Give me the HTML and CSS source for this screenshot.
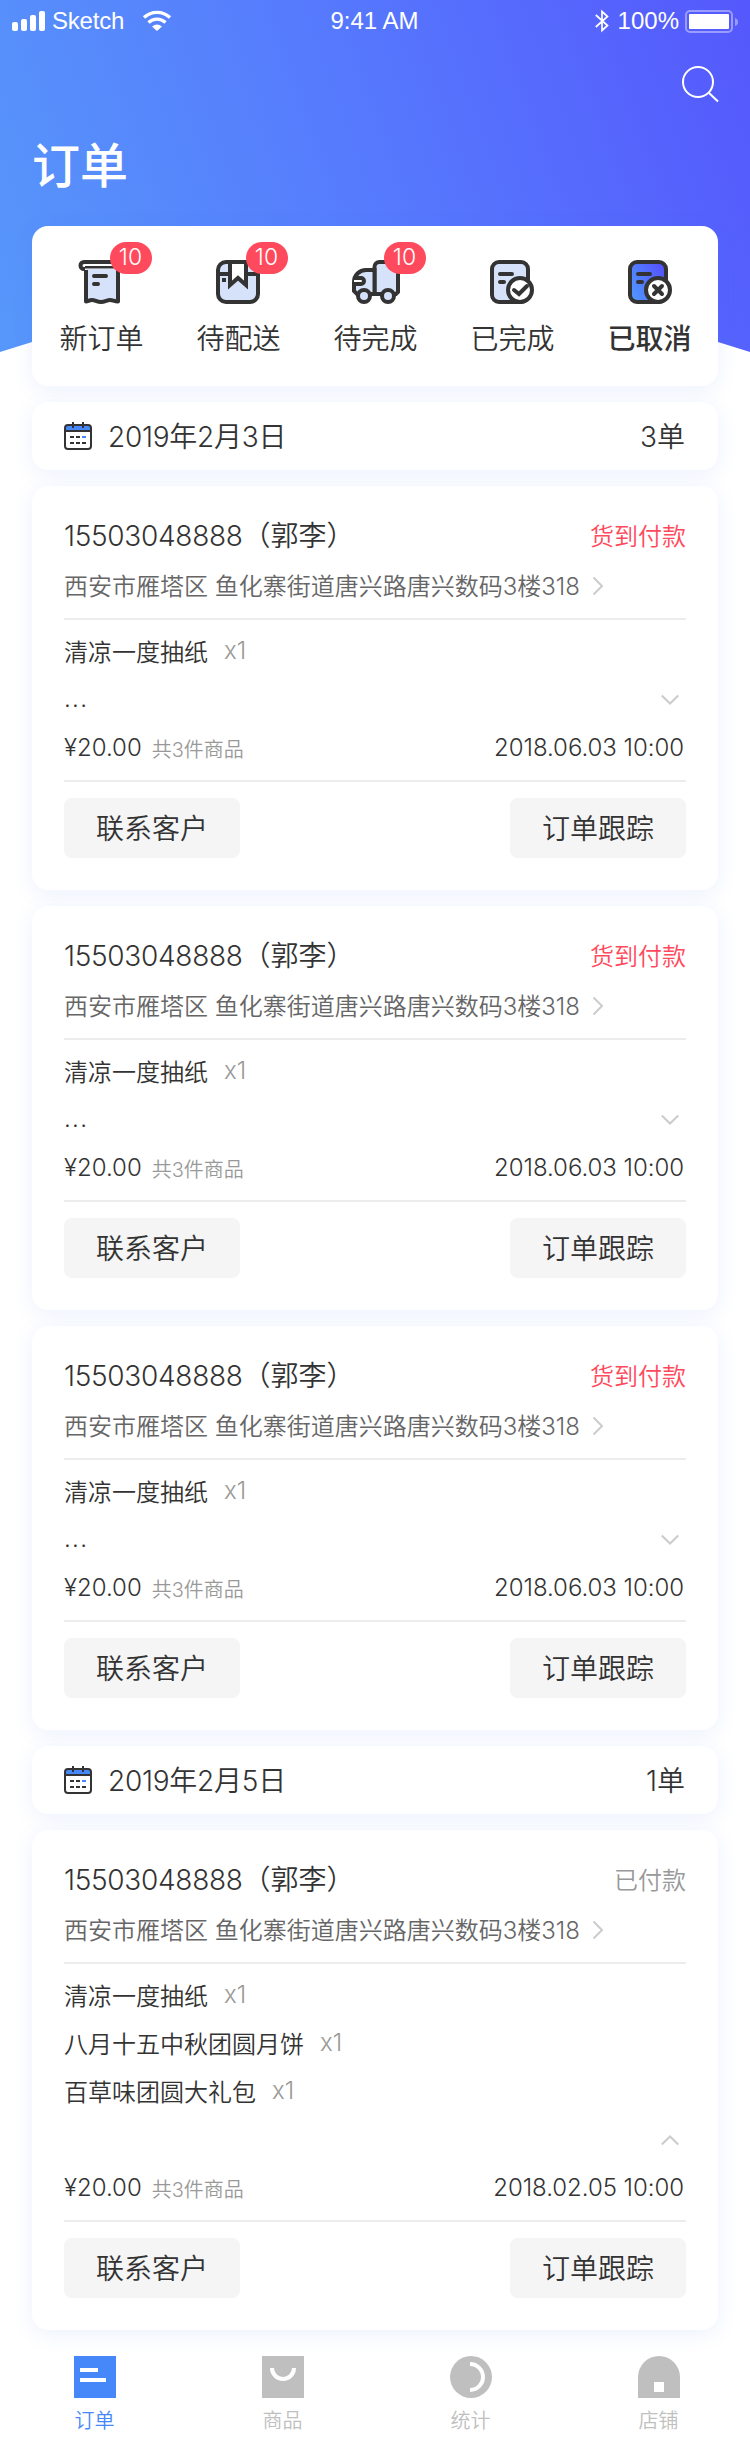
FILE: index.html
```html
<!DOCTYPE html>
<html lang="zh-CN">
<head>
<meta charset="utf-8">
<title>订单</title>
<link rel="stylesheet" href="styles.css">
</head>
<body>
<svg class="sprite" aria-hidden="true">
  <defs>
    <linearGradient id="active-fill" x1="0" y1=".8" x2="1" y2=".2"><stop offset="0" stop-color="#4f97ff"/><stop offset="1" stop-color="#5550fc"/></linearGradient>
    <symbol id="calendar" viewBox="0 0 28 28">
      <path d="M1 9V6a3 3 0 0 1 3-3h20a3 3 0 0 1 3 3v3z" fill="#4688fa"/>
      <rect x="1" y="3" width="26" height="24" rx="3" fill="none" stroke="#333" stroke-width="2"/>
      <path d="M1 9h26M9 0v6M19 0v6" stroke="#333" stroke-width="2"/>
      <path d="M6 15h4M12 15h4M6 21h4M12 21h4M18 21h4" stroke="#333" stroke-width="2"/>
      <path d="M18 15h4" stroke="#4688fa" stroke-width="2"/>
    </symbol>
    <symbol id="chevron-right" viewBox="0 0 12 20"><path d="M1.500 1.500 10 10l-8.500 8.500" fill="none" stroke="#ccc" stroke-width="2"/></symbol>
    <symbol id="chevron-down" viewBox="0 0 18 12"><path d="M.800 1.500 9 9.500l8.200-8" fill="none" stroke="#ccc" stroke-width="2"/></symbol>
  </defs>
</svg>

<div class="screen">
  <header class="hero">
    <div class="status">
      <div class="status-left">
        <svg class="signal" width="33" height="20" viewBox="0 0 33 20" fill="#fff"><rect y="11" width="6" height="9" rx="2"/><rect x="9" y="8" width="6" height="12" rx="2"/><rect x="18" y="4" width="6" height="16" rx="2"/><rect x="27" width="6" height="20" rx="2"/></svg>
        <span class="carrier">Sketch</span>
        <svg class="wifi" width="28" height="20" viewBox="0 0 28 20"><path d="M1 6.500a19 19 0 0 1 26 0M5.500 11.500a12.500 12.500 0 0 1 17 0" fill="none" stroke="#fff" stroke-width="3.400"/><path d="M9 15.500a8 8 0 0 1 10 0L14 20z" fill="#fff"/></svg>
      </div>
      <div class="clock">9:41 AM</div>
      <div class="status-right">
        <svg width="14" height="24" viewBox="0 0 14 24"><path d="M.800 6 12.500 16.500 7 21.500v-19l5.500 5L.800 18" fill="none" stroke="#fff" stroke-width="1.700"/></svg>
        <span class="percent">100%</span>
        <svg class="battery" width="54" height="23" viewBox="0 0 54 23"><rect x="1" y="1" width="46" height="21" rx="4" fill="none" stroke="#fff" stroke-opacity=".4" stroke-width="2"/><rect x="4" y="4" width="40" height="15" rx="1" fill="#fff"/><path d="M50 8q3 1 3 4t-3 4z" fill="#fff" fill-opacity=".4"/></svg>
      </div>
    </div>
    <div class="search"><svg width="38" height="38" viewBox="0 0 38 38"><circle cx="17" cy="17" r="15" fill="none" stroke="#fff" stroke-width="2"/><path d="m28 28 9 8.500" stroke="#fff" stroke-width="2"/></svg></div>
    <h1>订单</h1>
  </header>

  <main class="content">
    <nav class="card tabs">
      <a class="tab"><span class="tab-icon">
        <svg width="48" height="48" viewBox="0 0 48 48"><path d="M9 11h32v32c-4 0-5-2-8-2s-5 3-9 3-6-2-9-2-4 1.500-6 1.500z" fill="#d5e2fa"/><path d="M9 12v31.500c2 0 3-1.500 6-1.500s5 2 9 2 6-2 9-2 4 1.500 8 1.500V12" fill="none" stroke="#333" stroke-width="4" stroke-linejoin="round"/><path d="M42 4H7a3.500 3.500 0 0 0 0 7h1" fill="#fff" stroke="#333" stroke-width="4"/><path d="M8 9h35" stroke="#333" stroke-width="3"/><path d="M7 7h36" stroke="#fff" stroke-width="2"/><path d="M17 18h12M17 26h4" stroke="#333" stroke-width="4" stroke-linecap="round"/></svg>
        <b class="badge">10</b></span><span class="tab-label">新订单</span></a>
      <a class="tab"><span class="tab-icon">
        <svg width="48" height="48" viewBox="0 0 48 48"><rect x="4" y="4" width="40" height="40" rx="8" fill="#d5e2fa" stroke="#333" stroke-width="4"/><path d="M4 16h40" stroke="#333" stroke-width="4"/><path d="M16 4h16v23l-8-7-8 7z" fill="#fff" stroke="#333" stroke-width="4"/><path d="M8 20h4v4H8z" fill="#333"/></svg>
        <b class="badge badge-near">10</b></span><span class="tab-label">待配送</span></a>
      <a class="tab"><span class="tab-icon">
        <svg width="48" height="48" viewBox="0 0 48 48"><g stroke="#333" stroke-width="4"><path d="M23.500 36V9a5 5 0 0 1 5-5H42a5 5 0 0 1 5 5v25l-2 2z" fill="#d5e2fa"/><path d="M23.500 12H15A12 12 0 0 0 3 24v9l3 3h17.500z" fill="#d5e2fa"/><path d="M3 20h7a3 3 0 0 1 0 6H3" fill="#fff"/><circle cx="13" cy="38" r="6" fill="#d5e2fa"/><circle cx="37" cy="38" r="6" fill="#d5e2fa"/></g></svg>
        <b class="badge">10</b></span><span class="tab-label">待完成</span></a>
      <a class="tab"><span class="tab-icon">
        <svg width="48" height="48" viewBox="0 0 48 48"><g stroke="#333" stroke-width="4" stroke-linecap="round"><rect x="4" y="4" width="36" height="40" rx="7" fill="#d5e2fa"/><path d="M12 16h12M12 24h4"/><circle cx="32" cy="32" r="12" fill="#fff"/><path d="m26 32 5 4 8-8" fill="none"/></g></svg>
        </span><span class="tab-label">已完成</span></a>
      <a class="tab active"><span class="tab-icon">
        <svg width="48" height="48" viewBox="0 0 48 48"><g stroke="#333" stroke-width="4" stroke-linecap="round"><rect x="5" y="4" width="36" height="40" rx="7" fill="url(#active-fill)"/><path d="M13 16h12M13 24h4"/><circle cx="33" cy="32" r="12" fill="#fff"/><path d="m29 28 8 8m0-8-8 8"/></g></svg>
        </span><span class="tab-label">已取消</span></a>
    </nav>

    <section class="card day"><svg class="cal" width="28" height="28"><use href="#calendar"/></svg><h2>2019年2月3日</h2><span class="count">3单</span></section>

    <article class="card order">
      <div class="head"><span class="name"><span class="phone">15503048888</span>（郭李）</span><span class="pay">货到付款</span></div>
      <div class="address"><span>西安市雁塔区 鱼化寨街道唐兴路唐兴数码3楼318</span><svg width="12" height="20"><use href="#chevron-right"/></svg></div>
      <div class="goods">
        <div class="row"><span>清凉一度抽纸</span><span class="qty">x1</span></div>
        <div class="row more"><span class="dots">...</span><svg width="18" height="12"><use href="#chevron-down"/></svg></div>
        <div class="row total"><span class="price">¥20.00</span><span class="sum">共3件商品</span><time>2018.06.03 10:00</time></div>
      </div>
      <div class="actions"><button>联系客户</button><button>订单跟踪</button></div>
    </article>

    <article class="card order">
      <div class="head"><span class="name"><span class="phone">15503048888</span>（郭李）</span><span class="pay">货到付款</span></div>
      <div class="address"><span>西安市雁塔区 鱼化寨街道唐兴路唐兴数码3楼318</span><svg width="12" height="20"><use href="#chevron-right"/></svg></div>
      <div class="goods">
        <div class="row"><span>清凉一度抽纸</span><span class="qty">x1</span></div>
        <div class="row more"><span class="dots">...</span><svg width="18" height="12"><use href="#chevron-down"/></svg></div>
        <div class="row total"><span class="price">¥20.00</span><span class="sum">共3件商品</span><time>2018.06.03 10:00</time></div>
      </div>
      <div class="actions"><button>联系客户</button><button>订单跟踪</button></div>
    </article>

    <article class="card order">
      <div class="head"><span class="name"><span class="phone">15503048888</span>（郭李）</span><span class="pay">货到付款</span></div>
      <div class="address"><span>西安市雁塔区 鱼化寨街道唐兴路唐兴数码3楼318</span><svg width="12" height="20"><use href="#chevron-right"/></svg></div>
      <div class="goods">
        <div class="row"><span>清凉一度抽纸</span><span class="qty">x1</span></div>
        <div class="row more"><span class="dots">...</span><svg width="18" height="12"><use href="#chevron-down"/></svg></div>
        <div class="row total"><span class="price">¥20.00</span><span class="sum">共3件商品</span><time>2018.06.03 10:00</time></div>
      </div>
      <div class="actions"><button>联系客户</button><button>订单跟踪</button></div>
    </article>

    <section class="card day"><svg class="cal" width="28" height="28"><use href="#calendar"/></svg><h2>2019年2月5日</h2><span class="count">1单</span></section>

    <article class="card order">
      <div class="head"><span class="name"><span class="phone">15503048888</span>（郭李）</span><span class="pay paid">已付款</span></div>
      <div class="address"><span>西安市雁塔区 鱼化寨街道唐兴路唐兴数码3楼318</span><svg width="12" height="20"><use href="#chevron-right"/></svg></div>
      <div class="goods">
        <div class="row"><span>清凉一度抽纸</span><span class="qty">x1</span></div>
        <div class="row"><span>八月十五中秋团圆月饼</span><span class="qty">x1</span></div>
        <div class="row"><span>百草味团圆大礼包</span><span class="qty">x1</span></div>
        <div class="row more open"><svg width="18" height="12"><use href="#chevron-down"/></svg></div>
        <div class="row total"><span class="price">¥20.00</span><span class="sum">共3件商品</span><time>2018.02.05 10:00</time></div>
      </div>
      <div class="actions"><button>联系客户</button><button>订单跟踪</button></div>
    </article>
  </main>

  <footer class="tabbar">
    <a class="on"><svg width="42" height="42" viewBox="0 0 42 42"><path d="M0 0h42v42H0z" fill="#4688fa"/><path d="M6 12h18v4H6zM6 22h26v4H6z" fill="#fff"/></svg><span>订单</span></a>
    <a><svg width="42" height="42" viewBox="0 0 42 42"><path d="M0 0h42v42H0z" fill="#bfbfbf"/><path d="M10 12a11 11 0 0 0 22 0" fill="none" stroke="#fff" stroke-width="4"/></svg><span>商品</span></a>
    <a><svg width="42" height="42" viewBox="0 0 42 42"><circle cx="21" cy="21" r="21" fill="#bfbfbf"/><path d="M20 8a13 13 0 0 1 0 26" fill="none" stroke="#fff" stroke-width="4"/></svg><span>统计</span></a>
    <a><svg width="42" height="42" viewBox="0 0 42 42"><path d="M0 42V21a21 21 0 0 1 42 0v21z" fill="#bfbfbf"/><path d="M16 26h10v10H16z" fill="#fff"/></svg><span>店铺</span></a>
  </footer>
</div>
</body>
</html>
```
FILE: styles.css
```css
* { box-sizing: border-box; }
body { margin: 0; background: #fff; color: #333; font-family: "Inter", "Noto Sans CJK SC", sans-serif; font-weight: 350; }
svg { display: block; flex: none; overflow: visible; }
.sprite { position: absolute; width: 0; height: 0; }
.screen { width: 750px; height: 2444px; overflow: hidden; display: flex; flex-direction: column; }

.hero { height: 352px; flex: none; color: #fff; background: linear-gradient(70deg, #5797fa 0%, #567bfd 48%, #5558fc 100%); clip-path: polygon(0 0, 100% 0, 100% 100%, 50% 235px, 0 100%); }
.status { height: 40px; display: grid; grid-template-columns: 1fr auto 1fr; align-items: center; padding: 0 11px 0 12px; font: 400 24px/40px "Liberation Sans", sans-serif; }
.status-left, .status-right { display: flex; align-items: center; }
.carrier { margin-left: 7px; line-height: 38px; letter-spacing: -.2px; }
.wifi { margin-left: 19px; }
.clock { line-height: 42px; margin-right: 2px; }
.status-right { justify-content: flex-end; }
.percent { margin: 0 6px 0 9px; line-height: 38px; }
.search { display: flex; justify-content: flex-end; padding: 25px 31px 0 0; }
h1 { margin: 28px 0 0 32px; font-size: 48px; line-height: 70px; font-weight: 500; }

.content { margin-top: -126px; padding: 0 32px; display: flex; flex-direction: column; gap: 16px; position: relative; }
.card { background: #fff; border-radius: 16px; box-shadow: 0 4px 20px rgba(70, 120, 250, .1); }

.tabs { height: 160px; display: grid; grid-template-columns: 138px 136px 138px 136px 138px; }
.tab { display: flex; flex-direction: column; align-items: center; padding-top: 32px; }
.tab-icon { position: relative; }
.badge { position: absolute; left: 33px; top: -16px; width: 42px; height: 32px; padding-right: 1px; border-radius: 16px; background: #ff495c; color: #fff; font-size: 23px; font-weight: 300; line-height: 31px; text-align: center; }
.badge-near { left: 32px; }
.tab-label { margin: 13px 0 0 1px; font-size: 28px; line-height: 40px; }
.active .tab-label { font-weight: 500; }

.day { height: 68px; display: flex; align-items: center; padding: 0 33px 2px 32px; font-size: 28px; }
.cal { margin: 2px 16px 0 0; }
h2 { margin: 0; font-size: 28px; font-weight: inherit; letter-spacing: -.25px; }
.count { margin-left: auto; }

.order { padding: 23px 32px 32px; }
.head { height: 50px; display: flex; align-items: center; justify-content: space-between; font-size: 28px; }
.phone { letter-spacing: -.3px; }
.pay { font-size: 24px; color: #ff495c; }
.paid { color: #999; }
.address { height: 50px; display: flex; align-items: center; gap: 12px; font-size: 24px; color: #666; white-space: nowrap; }
.address svg { margin-top: 3px; }
.goods { margin-top: 9px; padding: 6px 0 10px; border: solid #ececec; border-width: 2px 0; font-size: 24px; }
.row { height: 48px; display: flex; align-items: center; }
.qty { margin-left: 16px; color: #999; }
.more { justify-content: space-between; padding: 4px 7px 0 0; }
.dots { letter-spacing: 1.3px; padding-bottom: 4px; }
.open { justify-content: flex-end; }
.open svg { transform: scaleY(-1); }
.total { padding: 3px 2px 0 0; }
.sum { margin-left: 10px; font-size: 20px; color: #999; padding-top: 1px; }
time { margin-left: auto; letter-spacing: -.05px; }
.actions { display: flex; justify-content: space-between; padding-top: 16px; }
button { width: 176px; height: 60px; padding: 0 0 3px; border: 0; border-radius: 8px; background: #f5f5f5; color: #333; font: inherit; font-size: 28px; }

.tabbar { display: flex; padding: 26px 0 0 1px; position: relative; }
.tabbar a { width: 188px; flex: none; display: flex; flex-direction: column; align-items: center; font-size: 20px; line-height: 30px; color: #bfbfbf; }
.tabbar span { margin: 8px 1px 0 0; }
.tabbar .on { color: #4688fa; }
```
